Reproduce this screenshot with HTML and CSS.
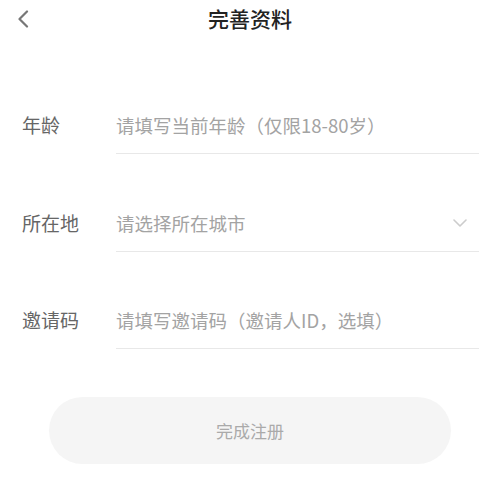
FILE: index.html
```html
<!DOCTYPE html>
<html lang="zh-CN">
<head>
<meta charset="utf-8">
<title>完善资料</title>
<link rel="stylesheet" href="styles.css">
</head>
<body>
<div class="page">
  <header class="topbar">
    <div class="back">
      <svg width="12" height="18" viewBox="0 0 12 18"><path d="M10 1.5 L2.5 9 L10 16.5" fill="none" stroke="#777" stroke-width="2.2" stroke-linecap="round" stroke-linejoin="round"/></svg>
    </div>
    <h1 class="title">完善资料</h1>
    <div class="spacer"></div>
  </header>
  <form class="form">
    <div class="rows">
      <div class="row">
        <label class="label">年龄</label>
        <div class="field"><span class="placeholder">请填写当前年龄（仅限18-80岁）</span></div>
      </div>
      <div class="row">
        <label class="label">所在地</label>
        <div class="field">
          <span class="placeholder">请选择所在城市</span>
          <svg class="arrow" width="14" height="8" viewBox="0 0 14 8"><path d="M1 1 L7 7 L13 1" fill="none" stroke="#ccc" stroke-width="1.6" stroke-linecap="round" stroke-linejoin="round"/></svg>
        </div>
      </div>
      <div class="row">
        <label class="label">邀请码</label>
        <div class="field"><span class="placeholder">请填写邀请码（邀请人ID，选填）</span></div>
      </div>
    </div>
    <div class="actions">
      <button type="button" class="submit">完成注册</button>
    </div>
  </form>
</div>
</body>
</html>
```
FILE: styles.css
```css
* { box-sizing: border-box; }
html, body { margin: 0; padding: 0; background: #fff; }
body {
  font-family: "Noto Sans CJK SC", "Noto Sans", sans-serif;
  width: 500px;
  height: 478px;
  overflow: hidden;
}
.topbar {
  display: grid;
  grid-template-columns: 1fr auto 1fr;
  align-items: center;
  height: 36px;
}
.back {
  padding-left: 17px;
  padding-top: 2px;
  display: flex;
  align-items: center;
}
.title {
  margin: 0;
  font-size: 21px;
  font-weight: 500;
  color: #222;
  line-height: 36px;
}
.form {
  padding-top: 65px;
}
.rows {
  display: flex;
  flex-direction: column;
  gap: 44.5px;
}
.row {
  display: flex;
  align-items: flex-end;
  padding-left: 22px;
  padding-right: 21px;
}
.label {
  width: 94px;
  font-size: 19px;
  color: #666;
  line-height: 48px;
  margin-bottom: 5px;
}
.field {
  flex: 1;
  display: flex;
  align-items: center;
  justify-content: space-between;
  height: 53px;
  padding-bottom: 4px;
  border-bottom: 1px solid #e8e8e8;
}
.placeholder {
  font-size: 18.5px;
  color: #a3a3a3;
  line-height: 48px;
}
.arrow { margin-right: 12px; }
.actions {
  display: flex;
  justify-content: center;
  padding-top: 48px;
}
.submit {
  width: 402px;
  height: 67px;
  border: none;
  border-radius: 34px;
  background: #f5f5f5;
  font-family: inherit;
  font-size: 17px;
  color: #aaa;
  padding: 0;
}
```
